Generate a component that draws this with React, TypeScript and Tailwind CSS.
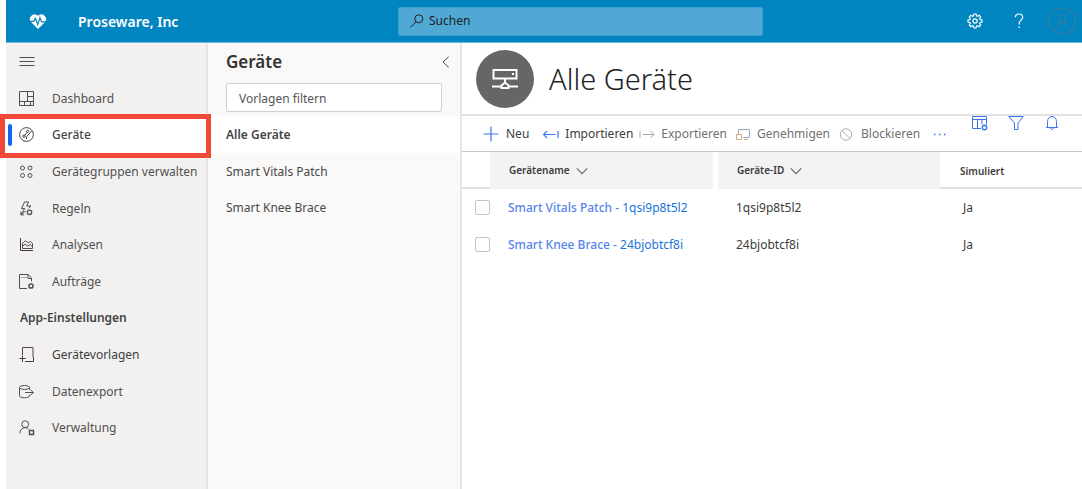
import React from 'react';
import type { ReactNode } from 'react';

type IconProps = { children: ReactNode; className?: string };

function Icon({ children, className = 'size-4' }: IconProps) {
  return (
    <svg viewBox="0 0 16 16" fill="none" stroke="currentColor" strokeWidth="1" aria-hidden="true" className={`shrink-0 ${className}`}>
      {children}
    </svg>
  );
}

const icons: Record<string, ReactNode> = {
  dashboard: (
    <Icon>
      <path d="M.5.5h14v14H.5zM8.5.5v10M.5 10.5h14M8.5 5.5h6M5.5 10.5v4M11.5 10.5v4" />
    </Icon>
  ),
  devices: (
    <Icon>
      <circle cx="7.5" cy="7.5" r="6.9" />
      <circle cx="8.6" cy="4.4" r="1.1" />
      <circle cx="5" cy="9.2" r="1.2" />
      <path d="M8 5.500 5.800 8.300M12.600 4.200 7.500 9.800v2.400" />
    </Icon>
  ),
  groups: (
    <Icon>
      <circle cx="3.5" cy="4" r="2" />
      <circle cx="11" cy="4" r="2" />
      <circle cx="3.5" cy="11.5" r="2" />
      <circle cx="11" cy="11.5" r="2" />
    </Icon>
  ),
  rules: (
    <Icon>
      <path d="M5.5 1h4L7.700 5h4.300L9.700 7.300M5.500 1 2.500 7.500h3.200L2 13.600 6.800 10M1.900 10.500v3.400h3.200" />
      <circle cx="10.5" cy="11.3" r="2.200" strokeWidth="1.300" />
    </Icon>
  ),
  analytics: (
    <Icon>
      <path d="M1.5 1v12.500h12.500" stroke="#4a2f4f" />
      <path d="M3.500 11.500V6.300L6.300 3.800l3 2 2.200-1.400L13.500 6.300v5.200zM3.500 9.200l2.600-2 2.700 2 2.400-1.600 2.300 2" />
    </Icon>
  ),
  jobs: (
    <Icon>
      <path d="M8 14.500H.5V.5h8.600l3.400 3.400v3.600M9 .5V4.500h3.500M2.500 3.500h1M4.500 3.500h1M6.500 3.500h1" />
      <circle cx="12" cy="12" r="2.100" strokeWidth="1.500" />
    </Icon>
  ),
  templates: (
    <Icon>
      <path d="M3.500 8.500V.5h10.500V10" stroke="#5c3a5c" />
      <path d="M6 14.500h8.500V10M.5 11.500h6M3.500 9v6" />
    </Icon>
  ),
  exportData: (
    <Icon>
      <ellipse cx="5.5" cy="3.5" rx="5" ry="2" />
      <path d="M.5 3.500v8.300c0 1.200 2.200 2 5 2s5-.8 5-2v-1M10.500 3.500v2M6 8.500h8.500M11.300 5.500l3 3-3 3" />
    </Icon>
  ),
  admin: (
    <Icon>
      <circle cx="6.2" cy="4.2" r="3.4" />
      <path d="M.8 13.300c.4-3.600 2.400-5.500 5.200-5.700 1.700 0 3 .7 3.900 1.900" />
      <path d="M10.500 10.500h4v4h-4z" strokeWidth="1.4" />
    </Icon>
  ),
};

function Gear({ className }: { className: string }) {
  return (
    <Icon className={className}>
      <path
        d="M6.900 1h2.200l.4 1.900 1 .4 1.700-1 1.500 1.500-1 1.700.4 1 1.900.4v2.200l-1.900.4-.4 1 1 1.700-1.500 1.500-1.700-1-1 .4-.4 1.900H6.900l-.4-1.900-1-.4-1.700 1-1.500-1.500 1-1.700-.4-1L1 9.100V6.900l1.900-.4.4-1-1-1.700 1.500-1.500 1.700 1 1-.4z"
        strokeWidth="1.2"
      />
      <circle cx="8" cy="8" r="2.2" strokeWidth="1.2" />
    </Icon>
  );
}

function ChevronDown() {
  return (
    <Icon className="size-3 text-[#666]">
      <path d="M1 4.500l7 7 7-7" strokeWidth="1.5" />
    </Icon>
  );
}

type NavEntry = { label: string; icon?: string; active?: boolean; dark?: boolean };

const navEntries: NavEntry[] = [
  { label: 'Dashboard', icon: 'dashboard' },
  { label: 'Geräte', icon: 'devices', active: true },
  { label: 'Gerätegruppen verwalten', icon: 'groups' },
  { label: 'Regeln', icon: 'rules' },
  { label: 'Analysen', icon: 'analytics' },
  { label: 'Aufträge', icon: 'jobs' },
  { label: 'App-Einstellungen' },
  { label: 'Gerätevorlagen', icon: 'templates', dark: true },
  { label: 'Datenexport', icon: 'exportData' },
  { label: 'Verwaltung', icon: 'admin' },
];

function Header() {
  return (
    <header className="flex h-[43px] items-center border-b border-[#6bbbe0] bg-[#0085c0] text-white">
      <div className="flex w-[392px] shrink-0 items-center pl-[22px]">
        <svg viewBox="0 0 20 18" className="h-[17px] w-5" aria-hidden="true">
          <path d="M10 17 2.300 9.200A5 5 0 0 1 10 2.900a5 5 0 0 1 7.700 6.300z" fill="#fff" />
          <path d="M1.500 8.800h4L7.300 5.500l2.400 6.800 2.400-7.500 1.600 4.600h4.500" fill="none" stroke="#0085c0" strokeWidth="1.2" />
        </svg>
        <span className="ml-[30px] text-[14px] font-semibold">Proseware, Inc</span>
      </div>
      <label className="flex h-[29px] max-w-[365px] flex-1 items-center gap-1 rounded-xs border border-[#3a9fcf] bg-[#4fa9d4] pl-2.5 text-[#222]">
        <Icon>
          <circle cx="9.8" cy="5.8" r="4" />
          <path d="M7 8.800 1.500 14.300" />
        </Icon>
        <input type="search" aria-label="Suchen" placeholder="Suchen" className="w-full min-w-0 bg-transparent text-[12px] outline-none placeholder:text-[#222]" />
      </label>
      <div className="ml-auto flex items-center">
        <button aria-label="Einstellungen" className="flex w-11 justify-center"><Gear className="size-4" /></button>
        <button aria-label="Hilfe" className="flex w-11 justify-center">
          <Icon className="size-4">
            <path d="M4.300 4.200C4.400 2.200 5.800 1 8 1s3.700 1.300 3.700 3.200c0 2.800-3.500 3.200-3.500 6.300v1" strokeWidth="1.2" />
            <path d="M8.200 13.500V15" strokeWidth="1.3" />
          </Icon>
        </button>
        <button aria-label="Konto" className="flex w-[41px] justify-center text-[#3c7b9a]">
          <svg viewBox="0 0 28 28" className="size-7" fill="none" stroke="currentColor" strokeWidth="1.2" aria-hidden="true">
            <circle cx="14" cy="14" r="13" />
            <circle cx="14" cy="11.5" r="3.9" />
            <path d="M9 20.500c.3-3.200 2.200-5.100 5-5.100s4.700 1.900 5 5.100" />
          </svg>
        </button>
      </div>
    </header>
  );
}

function Sidebar() {
  return (
    <nav aria-label="Hauptmenü" className="w-[202px] shrink-0 border-r-2 border-[#e6e5e4] bg-[#f2f1f0] text-[12px] text-[#505050]">
      <button aria-label="Menü" className="flex h-[37px] items-center pl-[13px]">
        <Icon><path d="M.5 3.500h15M.5 7.500h15M.5 11.500h15" /></Icon>
      </button>
      <ul className="grid h-[366px] grid-rows-10">
        {navEntries.map((entry) =>
          entry.icon ? (
            <li key={entry.label} className={entry.active ? 'relative bg-white' : ''}>
              <a
                href="#"
                aria-current={entry.active ? 'page' : undefined}
                className={`flex h-full items-center gap-[17px] pt-px pl-[13px] whitespace-nowrap ${entry.active ? 'font-medium text-[#444]' : ''} ${entry.dark ? 'text-[#3c3c3c]' : ''}`}
              >
                {icons[entry.icon]}
                {entry.label}
              </a>
              {entry.active && (
                <>
                  <span className="absolute top-[7px] left-[2px] h-[22px] w-1 rounded-full bg-[#1464f6]" />
                  <span className="pointer-events-none absolute -top-[3px] -right-[5px] -bottom-[5px] -left-[6px] z-10 border-5 border-[#f04937]" />
                </>
              )}
            </li>
          ) : (
            <li key={entry.label} className="flex items-center pl-[14px]">
              <h2 className="font-semibold text-[#444]">{entry.label}</h2>
            </li>
          ),
        )}
      </ul>
    </nav>
  );
}

function TemplatePanel() {
  return (
    <section className="w-[254px] shrink-0 border-r-2 border-[#e6e6e6] bg-[#faf9f8] text-[12px] text-[#484848]">
      <div className="flex h-[37px] items-center justify-between pr-2 pl-[18px]">
        <h2 className="text-[17px] font-semibold text-[#333]">Geräte</h2>
        <button aria-label="Bereich einklappen">
          <Icon className="size-3"><path d="M11.500 1 4 8l7.500 7" strokeWidth="1.3" /></Icon>
        </button>
      </div>
      <div className="h-9 px-[18px] pt-[3px]">
        <input
          type="text"
          aria-label="Vorlagen filtern"
          placeholder="Vorlagen filtern"
          className="h-[29px] w-full rounded-xs border border-[#cfcfcf] bg-white px-3 pt-0.5 outline-none placeholder:text-[#555]"
        />
      </div>
      <ul>
        <li><a href="#" className="flex h-[37px] items-center bg-white pl-[18px] font-semibold text-[#444]">Alle Geräte</a></li>
        <li><a href="#" className="flex h-[37px] items-center pl-[18px]">Smart Vitals Patch</a></li>
        <li><a href="#" className="flex h-[36px] items-center pl-[18px]">Smart Knee Brace</a></li>
      </ul>
    </section>
  );
}

function Toolbar() {
  return (
    <div className="flex h-9 items-center border-b border-[#c8c8c8] pl-[21px] text-[12px] text-[#3c3c3c]">
      <button className="flex items-center gap-[7px]">
        <Icon className="size-4 text-[#3b76f0]"><path d="M8 .5v15M.5 8h15" strokeWidth="1.2" /></Icon>Neu
      </button>
      <button className="ml-[14px] flex items-center gap-1.5">
        <Icon className="size-4 text-[#3b76f0]"><path d="M.5 8.500h12M4 5 .5 8.500 4 12M15 5v7" strokeWidth="1.2" /></Icon>Importieren
      </button>
      <button disabled className="ml-1.5 flex items-center gap-1.5 text-[#707070]">
        <Icon className="size-4 text-[#aaa]"><path d="M3.500 8.500H15M11.500 5 15 8.500 11.500 12M1 5v7" /></Icon>Exportieren
      </button>
      <button disabled className="ml-2 flex items-center gap-1.5 text-[#707070]">
        <Icon className="size-4 text-[#a0a6b4]">
          <path d="M3.500 8V3.500h11v8H8" />
          <path d="M1.500 8.500h5v5h-5zM9 13.500h4" stroke="#c9a98c" />
        </Icon>
        Genehmigen
      </button>
      <button disabled className="ml-2 flex items-center gap-[7px] text-[#707070]">
        <Icon className="size-4 text-[#aaa]"><circle cx="8" cy="8.5" r="5.7" /><path d="m4 4.500 8 8" /></Icon>Blockieren
      </button>
      <button aria-label="Mehr" className="ml-3 text-[#3b76f0]">
        <Icon className="size-4"><path d="M2 8.500h1.500M7 8.500h1.500M12 8.500h1.500" strokeWidth="1.5" /></Icon>
      </button>
      <div className="mr-[22px] ml-auto flex gap-5 self-start text-[#3b76f0]">
        <button aria-label="Spaltenoptionen">
          <Icon className="size-4">
            <path d="M9 12.500H.5V.5h14v8M.5 3.500h14M5.500 3.500v9M10 3.500v5" />
            <circle cx="12.5" cy="11.5" r="2.2" strokeWidth="1.4" />
          </Icon>
        </button>
        <button aria-label="Filter"><Icon className="size-4"><path d="M.8.5h14.400L10 7v6.500H6.500V7z" /></Icon></button>
        <button aria-label="Benachrichtigungen">
          <Icon className="size-4"><path d="M3.500 11.500V5.500c0-3 1.900-5 4.500-5s4.500 2 4.500 5v6M2 11.500h12M6.500 11.500c0 1.300.6 2 1.500 2s1.500-.7 1.500-2" /></Icon>
        </button>
      </div>
    </div>
  );
}

const devices = [
  { name: 'Smart Vitals Patch - ', id: '1qsi9p8t5l2', simulated: 'Ja' },
  { name: 'Smart Knee Brace - ', id: '24bjobtcf8i', simulated: 'Ja' },
];

function DeviceTable() {
  return (
    <table className="w-full table-fixed border-separate border-spacing-0 text-left text-[12px] text-[#3c3c3c]">
      <colgroup>
        <col className="w-7" />
        <col className="w-[228px]" />
        <col className="w-[222px]" />
        <col />
      </colgroup>
      <thead className="text-[10px]">
        <tr className="h-[37px]">
          <th aria-label="Auswahl" className="border-b-2 border-[#e1e1e1]" />
          <th scope="col" className="border-r-5 border-white bg-[#f3f3f3] pl-[19px] font-semibold">
            <button className="flex items-center gap-1.5">Gerätename <ChevronDown /></button>
          </th>
          <th scope="col" className="bg-[#f3f3f3] pl-[19px] font-semibold">
            <button className="flex items-center gap-1.5">Geräte-ID <ChevronDown /></button>
          </th>
          <th scope="col" className="border-b-2 border-[#e1e1e1] pt-1 pl-5 font-semibold">Simuliert</th>
        </tr>
      </thead>
      <tbody>
        {devices.map((device) => (
          <tr key={device.id} className="h-[37px]">
            <td className="pl-[13px]">
              <input type="checkbox" aria-label={device.id} className="block size-[15px] appearance-none rounded-xs border border-[#c4c4c4] bg-white checked:bg-[#3b76f0]" />
            </td>
            <td className="pl-[18px] whitespace-nowrap">
              <a href="#" className="text-[#1a73d9]"><span className="font-medium text-[#5585ec]">{device.name}</span>{device.id}</a>
            </td>
            <td className="pl-[18px]">{device.id}</td>
            <td className="pl-[23px]">{device.simulated}</td>
          </tr>
        ))}
      </tbody>
    </table>
  );
}

export default function App() {
  return (
    <div className="flex min-h-screen flex-col bg-white pl-1.5 font-['Noto_Sans',sans-serif]">
      <Header />
      <div className="flex flex-1">
        <Sidebar />
        <TemplatePanel />
        <main className="min-w-0 flex-1">
          <div className="flex h-[73px] items-center gap-[15px] border-b-2 border-[#e1e1e1] pl-[14px]">
            <span className="flex size-[58px] items-center justify-center rounded-full bg-[#666] text-white">
              <svg viewBox="0 0 26 22" className="h-[22px] w-[26px]" fill="none" stroke="currentColor" strokeWidth="2" aria-hidden="true">
                <path d="M1.500 2h23v8.500h-23zM13 10.500v4M0 18.500h9M17 18.500h9M9.500 20v-2.500l3.500-3 3.500 3V20z" />
                <path d="M20 6h2" />
              </svg>
            </span>
            <h1 className="text-[29px] font-light text-[#222]">Alle Geräte</h1>
          </div>
          <Toolbar />
          <DeviceTable />
        </main>
      </div>
    </div>
  );
}
